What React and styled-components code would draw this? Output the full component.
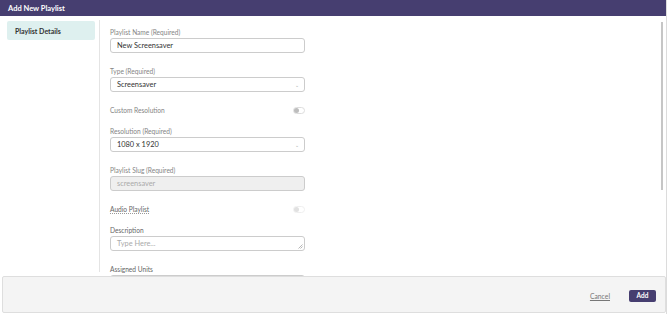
import React from 'react';
import styled, { createGlobalStyle } from 'styled-components';

const GlobalStyle = createGlobalStyle`
  html, body {
    margin: 0;
    padding: 0;
    background: #ffffff;
    font-family: Lato, "Open Sans", "Liberation Sans", sans-serif;
  }
`;

const Modal = styled.div`
  width: 667px;
  height: 314px;
  display: flex;
  flex-direction: column;
  box-sizing: border-box;
  border-right: 1px solid #dcdcdc;
  overflow: hidden;
`;

const Header = styled.div`
  height: 16px;
  flex: none;
  background: #463e70;
  color: #ffffff;
  font-size: 7.5px;
  font-weight: 700;
  display: flex;
  align-items: center;
  padding-left: 8px;
`;

const Main = styled.div`
  flex: 1;
  display: flex;
  min-height: 0;
`;

const Sidebar = styled.div`
  width: 100px;
  flex: none;
  box-sizing: border-box;
  margin: 4px 0;
  padding: 1px 4px 0 7px;
  border-right: 1px solid #e4e4e4;
`;

const SideItem = styled.div`
  height: 19px;
  background: #def0ef;
  color: #333;
  font-size: 7px;
  font-weight: 700;
  display: flex;
  align-items: center;
  padding-left: 8px;
  border-radius: 2px;
`;

const Form = styled.div`
  flex: 1;
  padding: 11px 0 0 10px;
  overflow: hidden;
`;

const Field = styled.div`
  width: 195px;
  margin-bottom: 13px;
`;

const Label = styled.div`
  height: 10px;
  line-height: 10px;
  font-size: 6.6px;
  color: ${p => (p.$dark ? '#666' : '#858585')};
  margin-bottom: 1px;
`;

const Input = styled.div`
  height: 15px;
  box-sizing: border-box;
  border: 1px solid #cccccc;
  border-radius: 3px;
  background: ${p => (p.$disabled ? '#efefef' : '#ffffff')};
  color: ${p => (p.$muted ? '#aaaaaa' : '#333333')};
  font-size: 7.4px;
  display: flex;
  align-items: center;
  justify-content: space-between;
  padding: 0 5px 0 6px;
  position: relative;
`;

const Chevron = styled.span`
  font-size: 5px;
  color: #aaa;
`;

const Grip = styled.svg`
  position: absolute;
  right: 1px;
  bottom: 1px;
`;

const ToggleRow = styled.div`
  width: 195px;
  height: 10px;
  display: flex;
  align-items: center;
  justify-content: space-between;
  margin-bottom: 11px;
  font-size: 6.6px;
`;

const RowLabel = styled.span`
  ${p => p.$dotted && 'border-bottom: 1px dotted #999; line-height: 8px;'}
  color: ${p => (p.$dotted ? '#666' : '#858585')};
`;

const Toggle = styled.div`
  width: 12px;
  height: 7px;
  box-sizing: border-box;
  border: 1px solid #dddddd;
  border-radius: 4px;
  background: #fff;
  position: relative;
  opacity: ${p => (p.$faded ? 0.45 : 1)};

  &::after {
    content: '';
    position: absolute;
    left: 0;
    top: 0;
    width: 5px;
    height: 5px;
    border-radius: 50%;
    background: #bdbdbd;
  }
`;

const ScrollTrack = styled.div`
  width: 4px;
  flex: none;
  padding-top: 6px;
  margin-right: 1px;
`;

const Thumb = styled.div`
  width: 2px;
  height: 168px;
  background: #c6c6c6;
`;

const Footer = styled.div`
  height: 37px;
  flex: none;
  margin: 0 0 1px 2px;
  box-sizing: border-box;
  border: 1px solid #dedede;
  border-radius: 2px;
  background: #f4f4f4;
  display: flex;
  align-items: center;
  justify-content: flex-end;
  padding-right: 9px;
  gap: 19px;
`;

const CancelLink = styled.span`
  font-size: 6.8px;
  color: #777;
  text-decoration: underline;
  margin-top: 2px;
`;

const AddButton = styled.button`
  width: 27px;
  height: 12px;
  border: none;
  border-radius: 2px;
  background: #463e70;
  color: #fff;
  font-family: inherit;
  font-size: 6.5px;
  font-weight: 700;
  padding: 0;
  margin-top: 2px;
`;

function App() {
  return (
    <>
      <GlobalStyle />
      <Modal>
        <Header>Add New Playlist</Header>
        <Main>
          <Sidebar>
            <SideItem>Playlist Details</SideItem>
          </Sidebar>
          <Form>
            <Field>
              <Label>Playlist Name (Required)</Label>
              <Input>New Screensaver</Input>
            </Field>
            <Field>
              <Label>Type (Required)</Label>
              <Input>
                Screensaver<Chevron>⌄</Chevron>
              </Input>
            </Field>
            <ToggleRow>
              <RowLabel>Custom Resolution</RowLabel>
              <Toggle />
            </ToggleRow>
            <Field>
              <Label>Resolution (Required)</Label>
              <Input>
                1080 x 1920<Chevron>⌄</Chevron>
              </Input>
            </Field>
            <Field>
              <Label>Playlist Slug (Required)</Label>
              <Input $disabled $muted>screensaver</Input>
            </Field>
            <ToggleRow>
              <RowLabel $dotted>Audio Playlist</RowLabel>
              <Toggle $faded />
            </ToggleRow>
            <Field>
              <Label $dark>Description</Label>
              <Input $muted>
                Type Here...
                <Grip width="5" height="5" viewBox="0 0 5 5">
                  <path d="M4.5 0.5 L0.5 4.5 M4.5 2.5 L2.5 4.5" stroke="#999" strokeWidth="0.7" />
                </Grip>
              </Input>
            </Field>
            <Field>
              <Label $dark>Assigned Units</Label>
              <Input />
            </Field>
          </Form>
          <ScrollTrack>
            <Thumb />
          </ScrollTrack>
        </Main>
        <Footer>
          <CancelLink>Cancel</CancelLink>
          <AddButton>Add</AddButton>
        </Footer>
      </Modal>
    </>
  );
}

export default App;
